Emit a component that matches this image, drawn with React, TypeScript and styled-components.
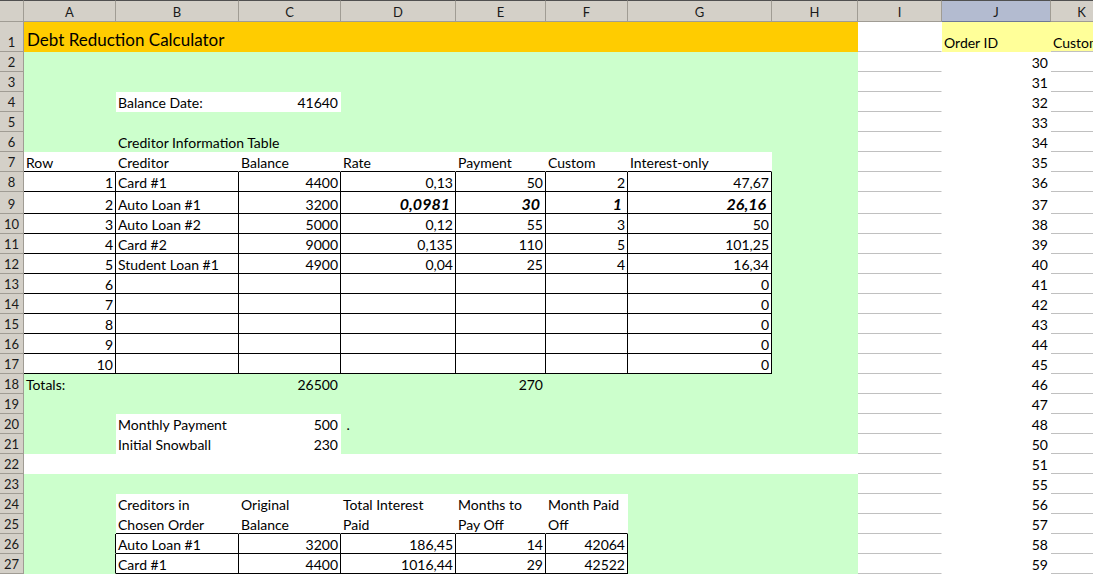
import React from 'react';
import styled, { createGlobalStyle, css } from 'styled-components';

const GlobalStyle = createGlobalStyle`
  html, body { margin: 0; padding: 0; background: #ffffff; overflow: hidden; }
  body { font-family: Lato, "Liberation Sans", sans-serif; color: #000; }
`;

const COLS = [24, 92, 123, 102, 115, 90, 82, 144, 86, 84, 109, 62];
const TEMPLATE = COLS.map((c) => `${c}px`).join(' ');
const LETTERS = ['A', 'B', 'C', 'D', 'E', 'F', 'G', 'H', 'I', 'J', 'K'];

const GREEN = '#ccffcc';
const YELLOW = '#ffcc00';
const PALE = '#ffff99';
const WHITE = '#ffffff';
const BLACK = '#000000';
const GRID = '#c0c0c0';
const HEAD = '#d4d0c8';
const HEAD_LINE = '#a09c94';

type Align = 'l' | 'r';
interface Spec {
  bg: string;
  t?: string;
  a?: Align;
  r?: string;
  b?: string;
  span?: number;
  bi?: boolean;
  title?: boolean;
}

const Sheet = styled.div`
  width: 1093px;
  height: 574px;
  overflow: hidden;
  background: #ffffff;
`;

const HeaderRow = styled.div`
  display: grid;
  grid-template-columns: ${TEMPLATE};
  height: 22px;
`;

const Corner = styled.div`
  box-sizing: border-box;
  background: ${HEAD};
  border-top: 1px solid #505050;
  border-right: 1px solid ${HEAD_LINE};
  border-bottom: 1px solid ${HEAD_LINE};
`;

const ColHead = styled.div<{ $sel?: boolean }>`
  box-sizing: border-box;
  background: ${(p) => (p.$sel ? '#b3bbd0' : HEAD)};
  border-top: 1px solid #505050;
  border-right: 1px solid ${HEAD_LINE};
  border-bottom: 1px solid ${(p) => (p.$sel ? '#6d7895' : HEAD_LINE)};
  display: flex;
  align-items: center;
  justify-content: center;
  padding-top: 2px;
  font-size: 13px;
  color: #1a1a1a;
`;

const Row = styled.div<{ $h: number }>`
  display: grid;
  grid-template-columns: ${TEMPLATE};
  height: ${(p) => p.$h}px;
`;

const RowHead = styled.div`
  box-sizing: border-box;
  background: ${HEAD};
  border-right: 1px solid ${HEAD_LINE};
  border-bottom: 1px solid ${HEAD_LINE};
  display: flex;
  align-items: flex-end;
  justify-content: center;
  font-size: 13px;
  line-height: 17px;
  color: #1a1a1a;
`;

const Cell = styled.div<{
  $bg: string;
  $r: string;
  $b: string;
  $a: Align;
  $span: number;
  $bi?: boolean;
  $title?: boolean;
}>`
  grid-column: span ${(p) => p.$span};
  box-sizing: border-box;
  min-width: 0;
  background: ${(p) => p.$bg};
  border-right: 1px solid ${(p) => p.$r};
  border-bottom: 1px solid ${(p) => p.$b};
  display: flex;
  align-items: flex-end;
  justify-content: ${(p) => (p.$a === 'r' ? 'flex-end' : 'flex-start')};
  padding: 0 2px;
  white-space: pre;
  overflow: hidden;
  font-size: 14px;
  line-height: 17px;
  ${(p) =>
    p.$bi &&
    css`
      font-size: 16px;
      font-weight: 700;
      font-style: italic;
      line-height: 19px;
      padding-right: 5px;
    `}
  ${(p) =>
    p.$title &&
    css`
      font-size: 17px;
      line-height: 20px;
      padding-left: 3px;
      padding-bottom: 1px;
    `}
`;

const g = (span = 1, t?: string, a?: Align): Spec => ({ bg: GREEN, span, t, a });
const w = (t?: string, a?: Align): Spec => ({ bg: WHITE, t, a });
const box = (t: string | undefined, a: Align = 'r', bi = false): Spec => ({
  bg: WHITE,
  t,
  a,
  r: BLACK,
  b: BLACK,
  bi,
});

const creditors: [string, string, string, string, string, string][] = [
  ['Card #1', '4400', '0,13', '50', '2', '47,67'],
  ['Auto Loan #1', '3200', '0,0981', '30', '1', '26,16'],
  ['Auto Loan #2', '5000', '0,12', '55', '3', '50'],
  ['Card #2', '9000', '0,135', '110', '5', '101,25'],
  ['Student Loan #1', '4900', '0,04', '25', '4', '16,34'],
];

const buildRows = (): { n: number; h: number; cells: Spec[] }[] => {
  const rows: { n: number; h: number; cells: Spec[] }[] = [];
  rows.push({ n: 1, h: 30, cells: [{ bg: YELLOW, span: 8, t: 'Debt Reduction Calculator', title: true }] });
  rows.push({ n: 2, h: 20, cells: [g(8)] });
  rows.push({ n: 3, h: 20, cells: [g(8)] });
  rows.push({ n: 4, h: 20, cells: [g(), w('Balance Date:'), w('41640', 'r'), g(5)] });
  rows.push({ n: 5, h: 20, cells: [g(8)] });
  rows.push({ n: 6, h: 20, cells: [g(), g(7, 'Creditor Information Table')] });
  rows.push({
    n: 7,
    h: 20,
    cells: [
      ...['Row', 'Creditor', 'Balance', 'Rate', 'Payment', 'Custom', 'Interest-only'].map(
        (t): Spec => ({ bg: WHITE, t, b: BLACK })
      ),
      g(),
    ],
  });
  for (let i = 1; i <= 10; i++) {
    const c = creditors[i - 1];
    const bi = i === 2;
    rows.push({
      n: 7 + i,
      h: bi ? 22 : 20,
      cells: [
        box(String(i)),
        box(c ? c[0] : undefined, 'l'),
        box(c ? c[1] : undefined),
        box(c ? c[2] : undefined, 'r', bi),
        box(c ? c[3] : undefined, 'r', bi),
        box(c ? c[4] : undefined, 'r', bi),
        box(c ? c[5] : '0', 'r', bi),
        g(),
      ],
    });
  }
  rows.push({ n: 18, h: 20, cells: [g(1, 'Totals:'), g(), g(1, '26500', 'r'), g(), g(1, '270', 'r'), g(3)] });
  rows.push({ n: 19, h: 20, cells: [g(8)] });
  rows.push({ n: 20, h: 20, cells: [g(), w('Monthly Payment'), w('500', 'r'), g(1, ' .'), g(4)] });
  rows.push({ n: 21, h: 20, cells: [g(), w('Initial Snowball'), w('230', 'r'), g(5)] });
  rows.push({ n: 22, h: 20, cells: [{ bg: WHITE, span: 8 }] });
  rows.push({ n: 23, h: 20, cells: [g(8)] });
  rows.push({
    n: 24,
    h: 20,
    cells: [g(), w('Creditors in'), w('Original'), w('Total Interest'), w('Months to'), w('Month Paid'), g(2)],
  });
  rows.push({
    n: 25,
    h: 20,
    cells: [
      g(),
      ...['Chosen Order', 'Balance', 'Paid', 'Pay Off', 'Off'].map((t): Spec => ({ bg: WHITE, t, b: BLACK })),
      g(2),
    ],
  });
  const order: [string, string, string, string, string][] = [
    ['Auto Loan #1', '3200', '186,45', '14', '42064'],
    ['Card #1', '4400', '1016,44', '29', '42522'],
  ];
  order.forEach((o, i) => {
    rows.push({
      n: 26 + i,
      h: 20,
      cells: [
        { bg: GREEN, r: BLACK },
        box(o[0], 'l'),
        box(o[1]),
        box(o[2]),
        box(o[3]),
        box(o[4]),
        g(2),
      ],
    });
  });
  return rows;
};

const ORDER_IDS: Record<number, string> = {
  2: '30', 3: '31', 4: '32', 5: '33', 6: '34', 7: '35', 8: '36', 9: '37', 10: '38',
  11: '39', 12: '40', 13: '41', 14: '42', 15: '43', 16: '44', 17: '45', 18: '46',
  19: '47', 20: '48', 21: '50', 22: '51', 23: '55', 24: '56', 25: '57', 26: '58', 27: '59',
};

const tailCells = (n: number): Spec[] => {
  if (n === 1) {
    return [
      { bg: WHITE, b: GRID },
      { bg: PALE, t: 'Order ID' },
      { bg: PALE, t: 'Customer ID', b: GRID },
    ];
  }
  return [
    { bg: WHITE, b: GRID },
    { bg: WHITE, t: ORDER_IDS[n], a: 'r' },
    { bg: WHITE, b: GRID },
  ];
};

const renderCell = (s: Spec, key: string) => (
  <Cell
    key={key}
    $bg={s.bg}
    $r={s.r ?? s.bg}
    $b={s.b ?? s.bg}
    $a={s.a ?? 'l'}
    $span={s.span ?? 1}
    $bi={s.bi}
    $title={s.title}
  >
    {s.t}
  </Cell>
);

export default function App() {
  const rows = buildRows();
  return (
    <>
      <GlobalStyle />
      <Sheet>
        <HeaderRow>
          <Corner />
          {LETTERS.map((l) => (
            <ColHead key={l} $sel={l === 'J'}>
              {l}
            </ColHead>
          ))}
        </HeaderRow>
        {rows.map((r) => (
          <Row key={r.n} $h={r.h}>
            <RowHead>{r.n}</RowHead>
            {[...r.cells, ...tailCells(r.n)].map((s, i) => renderCell(s, `${r.n}-${i}`))}
          </Row>
        ))}
      </Sheet>
    </>
  );
}
